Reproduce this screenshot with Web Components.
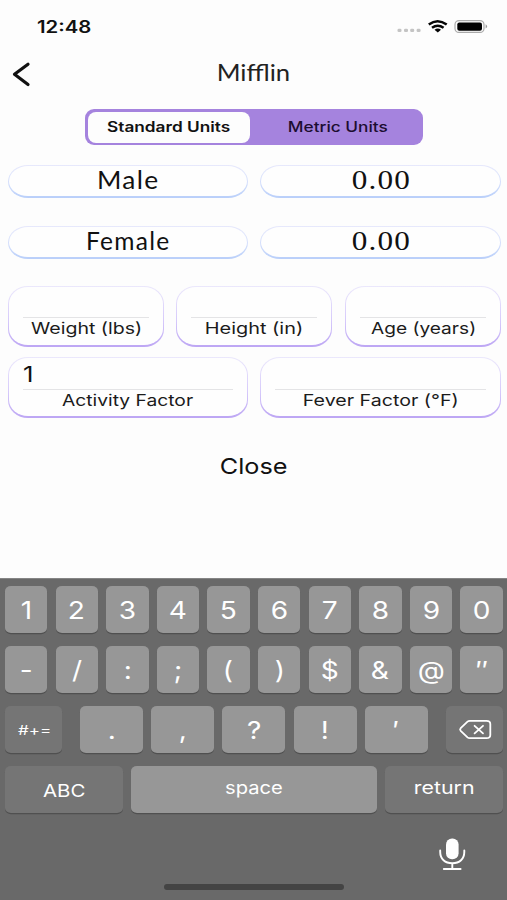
<!DOCTYPE html>
<html lang="en">
<head>
<meta charset="utf-8">
<title>Mifflin</title>
<style>
html,body{margin:0;background:#fdfdfd}
body{width:507px;height:900px;overflow:hidden;font-family:Inter,"Liberation Sans",sans-serif;color:#111}
</style>
</head>
<body>
<mifflin-app></mifflin-app>
<script>
const ctx = document.createElement('canvas').getContext('2d');
const define = (name, html, after) => customElements.define(name, class extends HTMLElement {
  connectedCallback() {
    if (this.shadowRoot) return;
    const root = this.attachShadow({mode: 'open'});
    root.innerHTML = html;
    if (after) after(this, root);
  }
});

/* Wide lettering: w = ink width, or sx = horizontal scale. The host's bottom edge is the baseline. */
define('wide-text', `<style>
:host{display:block;flex:none;line-height:1;white-space:nowrap}
span{display:block;width:max-content;transform-origin:0 0;white-space:pre}
</style><span></span>`, (el, root) => {
  const a = n => el.getAttribute(n);
  const t = a('text'), size = +a('size'), weight = a('weight') || '400';
  const family = a('font') || 'Inter';
  const ls = +(a('spacing') || 0);
  const span = root.querySelector('span');
  span.textContent = t;
  span.style.font = `${weight} ${size}px/${size}px "${family}", "Liberation Sans", sans-serif`;
  if (ls) span.style.letterSpacing = ls + 'px';
  ctx.font = `${weight} ${size}px "${family}", "Liberation Sans", sans-serif`;
  const m = ctx.measureText(t);
  const ink = m.actualBoundingBoxLeft + m.actualBoundingBoxRight + ls * (t.length - 1);
  const sx = a('w') ? a('w') / ink : +(a('sx') || 1);
  const cap = +(a('cap') || size * .727);
  const base = size / 2 + (m.fontBoundingBoxAscent - m.fontBoundingBoxDescent) / 2;
  el.style.width = ink * sx + 'px';
  el.style.height = cap + 'px';
  span.style.transform = `translate(${m.actualBoundingBoxLeft * sx}px,${cap - base}px) scaleX(${sx})`;
});

define('status-bar', `<style>
:host{display:flex;height:50px;box-sizing:border-box;padding:20.5px 19px 0 37px;justify-content:space-between;align-items:flex-start}
svg{display:block;margin-top:-2.5px}
</style>
<wide-text text="12:48" size="16.7" weight="600" w="53.5" cap="12.4"></wide-text>
<svg width="92" height="18" viewBox="396 18 92 18">
<g fill="#c4c4c4"><rect x="397.5" y="28.7" width="4" height="3.3" rx="1.3"/><rect x="404" y="28.7" width="4" height="3.3" rx="1.3"/><rect x="410.2" y="28.7" width="4" height="3.3" rx="1.3"/><rect x="416.6" y="28.7" width="4" height="3.3" rx="1.3"/></g>
<g fill="none" stroke="#050505" stroke-width="2.5"><path d="M428.8 24.6Q437.5 17.9 446.7 24.6"/><path d="M432 27.8Q437.7 23.7 443.6 27.8"/></g><path d="M434.5 29.7Q437.8 27.5 441 29.7L437.8 32.5Z" fill="#050505"/>
<rect x="455" y="20.6" width="29" height="11.8" rx="4" fill="none" stroke="#aaa" stroke-width="1.2"/><rect x="457.3" y="22.4" width="24.7" height="8.3" rx="2" fill="#000"/><path d="M485.6 24.3Q488.6 26.4 485.6 28.6Z" fill="#999"/>
</svg>`);

define('nav-bar', `<style>
:host{display:grid;grid-template-columns:1fr auto 1fr;height:59px;align-items:start}
svg{display:block;margin:11px 0 0 11px}
wide-text{margin:15.2px 0 0 2px;color:#222}
</style>
<svg width="22" height="28" viewBox="0 0 22 28"><path d="M17 3.2L3.5 13.3L17 23.6" fill="none" stroke="#111" stroke-width="3.2" stroke-linecap="round" stroke-linejoin="round"/></svg>
<wide-text text="Mifflin" font="Lato" size="22.6" weight="400" w="70.5" cap="16.5"></wide-text><i></i>`);

define('unit-switch', `<style>
:host{display:flex;box-sizing:border-box;width:338px;height:36px;margin:0 0 0 85px;padding:2.5px;background:#a583de;border-radius:9px}
div{display:flex;align-items:center;justify-content:center}
.on{width:162.5px;box-sizing:border-box;padding-top:.8px;background:#fdfdfd;border-radius:8px}
.off{flex:1;color:#1c0d31;padding:.8px 0 0 6px}
</style>
<div class="on"><wide-text text="Standard Units" size="14.2" weight="600" w="123.5"></wide-text></div>
<div class="off"><wide-text text="Metric Units" size="14.2" weight="500" w="98"></wide-text></div>`);

define('result-pill', `<style>
:host{display:flex;justify-content:center;box-sizing:border-box;height:33px;padding:5px 0 0 1px;border-radius:20px/16.5px;
background:linear-gradient(#fefefe,#fefefe) padding-box,linear-gradient(#e7e9fc,#d4dffc 55%,#b9cffa) border-box;border:1px solid transparent;border-bottom-width:2px}
</style><slot></slot>`);

define('input-box', `<style>
:host{display:flex;flex-direction:column;box-sizing:border-box;height:61px;padding:0 14px;border-radius:20px/18px;
background:linear-gradient(#fefefe,#fefefe) padding-box,linear-gradient(#ebe8fc,#d7cbfb 55%,#bda6f4) border-box;border:1.4px solid transparent;border-bottom-width:2px;border-top-width:1px}
.v{height:31.5px;box-sizing:border-box;padding:9.6px 0 0 0.3px;border-bottom:1.2px solid #e4e4e6}
.l{display:flex;justify-content:center;padding-top:4.2px;color:#1b1b1b}
</style><div class="v"><slot name="value"></slot></div><div class="l"><slot></slot></div>`);

define('key-cap', `<style>
:host{display:flex;align-items:center;justify-content:center;box-sizing:border-box;height:46.5px;padding-top:var(--drop,2.4px);border-radius:6px/5px;background:#979797;color:#fff;box-shadow:0 1.3px 0.5px #505050}
:host([dark]){background:#757575}
</style><slot></slot>`);

define('key-board', `<style>
:host{display:flex;flex-direction:column;box-sizing:border-box;height:322.5px;padding:7.5px 4px 0 5px;gap:13.5px;background:#696969;border-top:1.5px solid #858585}
.r{display:grid}
.ten{grid-template-columns:repeat(10,42.4px);justify-content:space-between}
.three{grid-template-columns:57px 18px 63px 8.2px 63px 8.2px 63px 8.2px 63px 8.2px 63px 1fr 57px}
.four{grid-template-columns:117.5px 246.5px 118px;justify-content:space-between}
.three>:nth-child(1){grid-column:1}.three>:nth-child(2){grid-column:3}.three>:nth-child(3){grid-column:5}.three>:nth-child(4){grid-column:7}.three>:nth-child(5){grid-column:9}.three>:nth-child(6){grid-column:11}.three>:nth-child(7){grid-column:13}
.foot{display:flex;justify-content:flex-end;padding:10px 36px 0 0}
.home{width:180px;height:5.5px;border-radius:3px;background:#444;margin:-1.2px 0 0 159px}
svg{display:block}
</style>
<div class="r ten" id="a"></div><div class="r ten" id="b"></div><div class="r three" id="c"></div>
<div class="r four">
<key-cap dark style="--drop:3.6px"><wide-text text="ABC" size="17.4" w="41.5"></wide-text></key-cap>
<key-cap style="--drop:0px"><wide-text text="space" size="17.5" w="57.5" cap="9.5" style="margin-top:1.6px"></wide-text></key-cap>
<key-cap dark style="--drop:0px"><wide-text text="return" size="17.5" w="58" cap="9.5" style="margin-top:1.6px"></wide-text></key-cap>
</div>
<div class="foot"><svg width="30" height="36" viewBox="437 836 30 36"><rect x="446" y="838.5" width="12.6" height="20.8" rx="6" fill="#fff"/><path d="M440.2 850.5V852C440.2 859 445 863.3 452.3 863.3S464.3 859 464.3 852V850.5M452.3 863.5V869M443.8 869H460.6" fill="none" stroke="#fff" stroke-width="1.9" stroke-linecap="round"/></svg></div>
<div class="home"></div>`, (el, root) => {
  const key = (c, drop) => `<key-cap style="--drop:${drop}px"><wide-text text='${c === '&' ? '&amp;' : c}' size="24.6" sx="1.14"></wide-text></key-cap>`;
  root.querySelector('#a').innerHTML = [...'1234567890'].map(c => key(c, 1.6)).join('');
  root.querySelector('#b').innerHTML = [...'-/:;()$&@″'].map(c => key(c, 1.2)).join('');
  root.querySelector('#c').innerHTML = '<key-cap dark style="--drop:2.6px"><wide-text text="#+=" size="13.6" w="32"></wide-text></key-cap>'
    + [...'.,?!′'].map(c => key(c, 1)).join('')
    + '<key-cap dark style="--drop:2px"><svg width="34" height="22" viewBox="457 719 34 22" fill="none" stroke="#fff" stroke-width="1.8" stroke-linejoin="round" stroke-linecap="round"><path d="M468.8 720.8H485.5Q489.3 720.8 489.3 724V735Q489.3 738.2 485.5 738.2H468.8Q467.5 738.2 466.5 737.3L459.7 730.8Q458.5 729.5 459.7 728.2L466.5 721.7Q467.5 720.8 468.8 720.8Z"/><path d="M473.6 725.8L482 733.4M482 725.8L473.6 733.4"/></svg></key-cap>';
});

define('mifflin-app', `<style>
:host{display:flex;flex-direction:column;width:507px;height:900px;background:#fdfdfd}
.grid{display:grid;padding:0 6.5px 0 7.5px;column-gap:12.5px}
.two{grid-template-columns:1fr 1fr}.tri{grid-template-columns:repeat(3,1fr)}
.res{margin-top:20px;row-gap:27.5px}
.one{margin-top:27px}.sec{margin-top:10.5px}
.close{display:flex;justify-content:center;margin-top:39.6px}
key-board{margin-top:auto}
</style>
<status-bar></status-bar><nav-bar></nav-bar><unit-switch></unit-switch>
<div class="grid two res">
<result-pill><wide-text text="Male" font="Lato" size="25" spacing="1.3" w="59" cap="18"></wide-text></result-pill>
<result-pill><wide-text text="0.00" font="Liberation Serif" size="27.5" spacing="1" w="56" cap="18"></wide-text></result-pill>
<result-pill><wide-text text="Female" font="Lato" size="25" spacing="1.3" w="81" cap="18"></wide-text></result-pill>
<result-pill><wide-text text="0.00" font="Liberation Serif" size="27.5" spacing="1" w="56" cap="18"></wide-text></result-pill>
</div>
<div class="grid tri one">
<input-box><wide-text text="Weight (lbs)" size="16.3" w="110"></wide-text></input-box>
<input-box><wide-text text="Height (in)" size="16.3" w="96"></wide-text></input-box>
<input-box><wide-text text="Age (years)" size="16.3" w="104"></wide-text></input-box>
</div>
<div class="grid two sec">
<input-box><wide-text slot="value" text="1" size="20.8" w="8.7"></wide-text><wide-text text="Activity Factor" size="16.3" w="131"></wide-text></input-box>
<input-box><wide-text text="Fever Factor (°F)" size="16.3" w="153.5"></wide-text></input-box>
</div>
<div class="close"><wide-text text="Close" size="22" w="65.5"></wide-text></div>
<key-board></key-board>`);
</script>
</body>
</html>
